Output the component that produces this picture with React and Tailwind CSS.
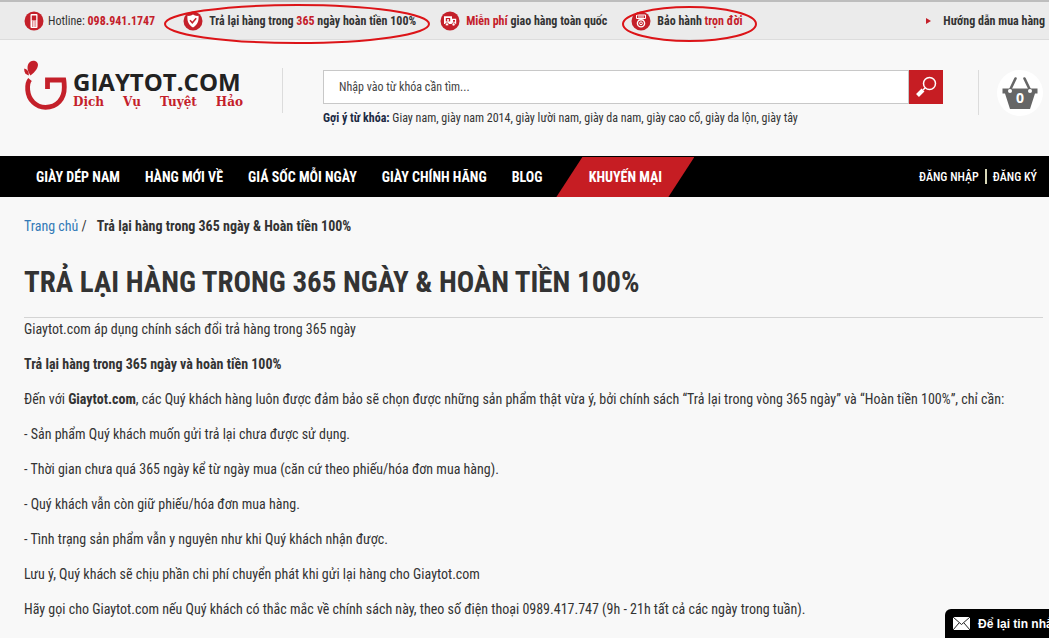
import React, { useState } from "react";

const navItems = ["Giày dép nam", "Hàng mới về", "Giá sốc mỗi ngày", "Giày chính hãng", "Blog"];

const keywords = [
  "Giay nam",
  "giày nam 2014",
  "giày lười nam",
  "giày da nam",
  "giày cao cổ",
  "giày da lộn",
  "giày tây",
];

const PhoneIcon = () => (
  <svg viewBox="0 0 20 20" className="h-5 w-5 shrink-0" aria-hidden="true">
    <circle cx="10" cy="10" r="9.5" fill="#c4202a" />
    <rect x="6.5" y="3" width="7" height="14" rx="1" fill="#fff" />
    <rect x="7.8" y="4.5" width="4.4" height="5" fill="#c4202a" />
    <path d="M8 11h1M9.6 11h1M11.2 11h1M8 13h1M9.6 13h1M11.2 13h1M8 15h1M9.6 15h1M11.2 15h1" stroke="#c4202a" />
  </svg>
);

const ShieldIcon = () => (
  <svg viewBox="0 0 20 20" className="h-5 w-5 shrink-0" aria-hidden="true">
    <circle cx="10" cy="10" r="9.5" fill="#c4202a" />
    <path d="M4.5 4.8C7 5.2 8.5 4.2 10 3.5c1.5.7 3 1.7 5.5 1.3.6 5-1 9-5.5 11.7C5.5 13.8 3.9 9.8 4.5 4.8z" fill="#fff" />
    <path d="M7 9.3l2.3 2.5L13.2 7.2" fill="none" stroke="#c4202a" strokeWidth="1.5" />
  </svg>
);

const TruckIcon = () => (
  <svg viewBox="0 0 20 20" className="h-5 w-5 shrink-0" aria-hidden="true">
    <circle cx="10" cy="10" r="9.5" fill="#c4202a" />
    <path d="M4 5.2h8v7.8H4zM12 7.8h4.2v5.2H12z" fill="#fff" />
    <path d="M5.8 7h4.4v3.4H5.8z" fill="#c4202a" />
    <path d="M7.2 8h1.6v2.4H7.2z" fill="#fff" />
    <path d="M13 9h2v1.8h-2z" fill="#c4202a" />
    <circle cx="7" cy="13.4" r="1.6" fill="#fff" stroke="#c4202a" strokeWidth="0.8" />
    <circle cx="13.6" cy="13.4" r="1.6" fill="#fff" stroke="#c4202a" strokeWidth="0.8" />
  </svg>
);

const MedalIcon = () => (
  <svg viewBox="0 0 20 20" className="h-5 w-5 shrink-0" aria-hidden="true">
    <circle cx="10" cy="10" r="9.5" fill="#c4202a" />
    <path d="M5.5 4h9v3.5h-9z" fill="none" stroke="#fff" />
    <path d="M8 4.5v4M10 4.5v4M12 4.5v4" stroke="#fff" />
    <circle cx="10" cy="12.3" r="3.6" fill="#c4202a" stroke="#fff" strokeWidth="1.4" />
    <circle cx="10" cy="12.3" r="1.4" fill="none" stroke="#fff" />
  </svg>
);

const Ring = ({ className }) => (
  <svg
    viewBox="0 0 100 40"
    preserveAspectRatio="none"
    className={`pointer-events-none absolute overflow-visible ${className}`}
    aria-hidden="true"
  >
    <ellipse cx="50" cy="20" rx="50" ry="20" fill="none" stroke="#dc1418" strokeWidth="2" vectorEffect="non-scaling-stroke" />
  </svg>
);

const TopBar = () => (
  <div className="flex h-10 items-center border-t-2 border-b border-t-[#bdbdbd] border-b-[#dcdcdc] bg-[#ebebeb] pr-1 pl-6 text-xs font-bold whitespace-nowrap">
    <div className="flex items-center gap-1">
      <PhoneIcon />
      <span className="font-normal">
        Hotline: <b className="text-[#c4202a]">098.941.1747</b>
      </span>
    </div>
    <div className="relative ml-7 flex items-center gap-[6px]">
      <ShieldIcon />
      <span>
        Trả lại hàng trong <span className="text-[#c4202a]">365</span> ngày hoàn tiền 100%
      </span>
      <Ring className="-top-[6px] -left-[18px] h-[38px] w-[264px]" />
    </div>
    <div className="ml-6 flex items-center gap-[6px]">
      <TruckIcon />
      <span>
        <span className="text-[#c4202a]">Miễn phí</span> giao hàng toàn quốc
      </span>
    </div>
    <div className="relative ml-6 flex items-center gap-[6px]">
      <MedalIcon />
      <span>
        Bảo hành <span className="text-[#c4202a]">trọn đời</span>
      </span>
      <Ring className="-top-1 -left-2 h-[34px] w-[133px]" />
    </div>
    <a href="#guide" className="ml-auto flex items-center gap-3">
      <svg viewBox="0 0 5 6" className="h-[6px] w-[5px]" aria-hidden="true">
        <path d="M0 0l5 3-5 3z" fill="#c4202a" />
      </svg>
      Hướng dẫn mua hàng
    </a>
  </div>
);

const Logo = () => (
  <a href="#home" className="flex w-[219px] shrink-0 items-end gap-[6px] whitespace-nowrap">
    <svg viewBox="0 0 43 50" className="h-[50px] w-[43px] shrink-0" aria-hidden="true">
      <path
        d="M6 19.5C3.7 22 3.4 26 3.7 30C4.5 40 12 47.3 21.5 47.3C33 47.3 40.5 39 40.3 27C40.2 24 40 21 39.8 20H23.5V29"
        fill="none"
        stroke="#c4202a"
        strokeWidth="4.8"
      />
      <path d="M6.5 15.5C1.5 9 3 1.5 9 .8C15.5 .8 16.500 8 6.5 15.5z" fill="#c4202a" />
      <path d="M4.8 15.5C1 14.5 -.2 11.5 .3 8.5C3.3 9.3 5.2 11.8 4.8 15.5z" fill="#c4202a" />
    </svg>
    <span className="flex flex-1 flex-col">
      <span className="font-['Open_Sans',sans-serif] text-2xl leading-6 font-bold text-[#222222]">GIAYTOT.COM</span>
      <span className="flex justify-between font-['DejaVu_Serif',serif] text-xs leading-4 font-bold text-[#c4202a]">
        <span>Dịch</span> <span>Vụ</span> <span>Tuyệt</span> <span>Hảo</span>
      </span>
    </span>
  </a>
);

const Search = () => {
  const [query, setQuery] = useState("");

  return (
    <div className="flex-1">
      <form className="flex h-[34px]" onSubmit={(e) => e.preventDefault()}>
        <input
          type="text"
          aria-label="Nhập vào từ khóa cần tìm"
          placeholder="Nhập vào từ khóa cần tìm..."
          value={query}
          onChange={(e) => setQuery(e.target.value)}
          className="min-w-0 flex-1 border border-[#c8c8c8] bg-white px-[15px] text-xs placeholder:text-[#444444]"
        />
        <button type="submit" aria-label="Tìm kiếm" className="flex w-[34px] items-center justify-center bg-[#c61d23]">
          <svg viewBox="0 0 22 22" className="h-[22px] w-[22px]" fill="none" stroke="#fff" aria-hidden="true">
            <circle cx="14.5" cy="7.5" r="6" strokeWidth="1.5" />
            <path d="M10 12l-2 2" strokeWidth="1.5" />
            <path d="M8 14l-5.5 5.5" strokeWidth="4" />
          </svg>
        </button>
      </form>
      <p className="mt-1 text-xs leading-5">
        <b className="text-[#1c2a44]">Gợi ý từ khóa:</b> {keywords.join(", ")}
      </p>
    </div>
  );
};

const Cart = () => (
  <button type="button" className="relative h-[46px] w-[46px] shrink-0 rounded-full bg-white">
    <svg viewBox="0 0 46 46" className="h-[46px] w-[46px]" aria-hidden="true">
      <path d="M5.5 18.5h35v5H38l-5 15.5H13L8 23.5H5.5z" fill="#666" />
      <path d="M13 20l5.5-11.5M33 20L27.5 8.5" stroke="#666" strokeWidth="2.6" strokeLinecap="round" />
      <circle cx="13" cy="21" r="2" fill="#fff" />
      <circle cx="33" cy="21" r="2" fill="#fff" />
    </svg>
    <span className="absolute inset-x-0 top-5 text-center font-['Open_Sans',sans-serif] text-sm leading-4 font-bold text-white">
      0
    </span>
  </button>
);

const NavBar = () => (
  <nav className="flex h-[41px] items-center bg-black pr-3 pl-9 text-sm font-bold whitespace-nowrap text-white uppercase">
    <div className="flex gap-[25px]">
      {navItems.map((item) => (
        <a key={item} href="#category">
          {item}
        </a>
      ))}
    </div>
    <a
      href="#sale"
      className="ml-[14px] flex h-10 w-[138px] items-center justify-center self-end bg-[#c61d23] [clip-path:polygon(26px_0,100%_0,calc(100%_-_26px)_100%,0_100%)]"
    >
      Khuyến mại
    </a>
    <div className="ml-auto flex items-center gap-[6px] text-xs font-medium">
      <a href="#login">Đăng nhập</a>
      <span className="h-[15px] w-[2px] bg-[#d8d8b8]" />
      <a href="#register">Đăng ký</a>
    </div>
  </nav>
);

const App = () => {
  return (
    <div className="min-h-screen overflow-hidden bg-[#f8f8f8] font-['Roboto_Condensed','Liberation_Sans_Narrow',Roboto,sans-serif] text-[#333333]">
      <TopBar />
      <header className="flex h-[116px] items-start pr-[6px] pl-6">
        <div className="mt-5">
          <Logo />
        </div>
        <div className="mt-7 mr-10 ml-[39px] h-[45px] w-px bg-[#dcdcdc]" />
        <div className="mt-[30px] flex flex-1">
          <Search />
        </div>
        <div className="mt-[30px] mr-[18px] ml-[35px] h-[45px] w-px bg-[#dcdcdc]" />
        <div className="mt-[30px]">
          <Cart />
        </div>
      </header>
      <NavBar />
      <main className="pr-[6px] pl-6 text-sm leading-5">
        <div className="mt-[19px] flex gap-[10px]">
          <span>
            <a href="#home" className="text-[#337ab7]">
              Trang chủ
            </a>{" "}
            /
          </span>
          <b>Trả lại hàng trong 365 ngày &amp; Hoàn tiền 100%</b>
        </div>
        <h1 className="mt-7 border-b border-[#d4d4d4] pb-[17px] text-[29px] leading-9 font-bold uppercase">
          Trả lại hàng trong 365 ngày &amp; Hoàn tiền 100%
        </h1>
        <div className="mt-[1px] flex flex-col gap-[15px]">
          <p>Giaytot.com áp dụng chính sách đổi trả hàng trong 365 ngày</p>
          <p className="font-bold">Trả lại hàng trong 365 ngày và hoàn tiền 100%</p>
          <p>
            Đến với <b>Giaytot.com</b>, các Quý khách hàng luôn được đảm bảo sẽ chọn được những sản phẩm thật vừa ý, bởi
            chính sách “Trả lại trong vòng 365 ngày” và “Hoàn tiền 100%”, chỉ cần:
          </p>
          <p>- Sản phẩm Quý khách muốn gửi trả lại chưa được sử dụng.</p>
          <p>- Thời gian chưa quá 365 ngày kể từ ngày mua (căn cứ theo phiếu/hóa đơn mua hàng).</p>
          <p>- Quý khách vẫn còn giữ phiếu/hóa đơn mua hàng.</p>
          <p>- Tình trạng sản phẩm vẫn y nguyên như khi Quý khách nhận được.</p>
          <p>Lưu ý, Quý khách sẽ chịu phần chi phí chuyển phát khi gửi lại hàng cho Giaytot.com</p>
          <p>
            Hãy gọi cho Giaytot.com nếu Quý khách có thắc mắc về chính sách này, theo số điện thoại 0989.417.747 (9h -
            21h tất cả các ngày trong tuần).
          </p>
        </div>
      </main>
      <button
        type="button"
        className="fixed right-0 bottom-0 flex h-[29px] w-[104px] items-center gap-2 overflow-hidden rounded-tl-md bg-black pl-2 font-['Liberation_Sans',sans-serif] text-xs font-bold whitespace-nowrap text-white"
      >
        <svg viewBox="0 0 17 13" className="h-[13px] w-[17px] shrink-0" aria-hidden="true">
          <path d="M0 0h17v13H0z" fill="#fff" />
          <path d="M0 0l8.5 7.5L17 0M0 13l6-7M17 13l-6-7" fill="none" stroke="#222" />
        </svg>
        Để lại tin nhắn
      </button>
    </div>
  );
};

export default App;
